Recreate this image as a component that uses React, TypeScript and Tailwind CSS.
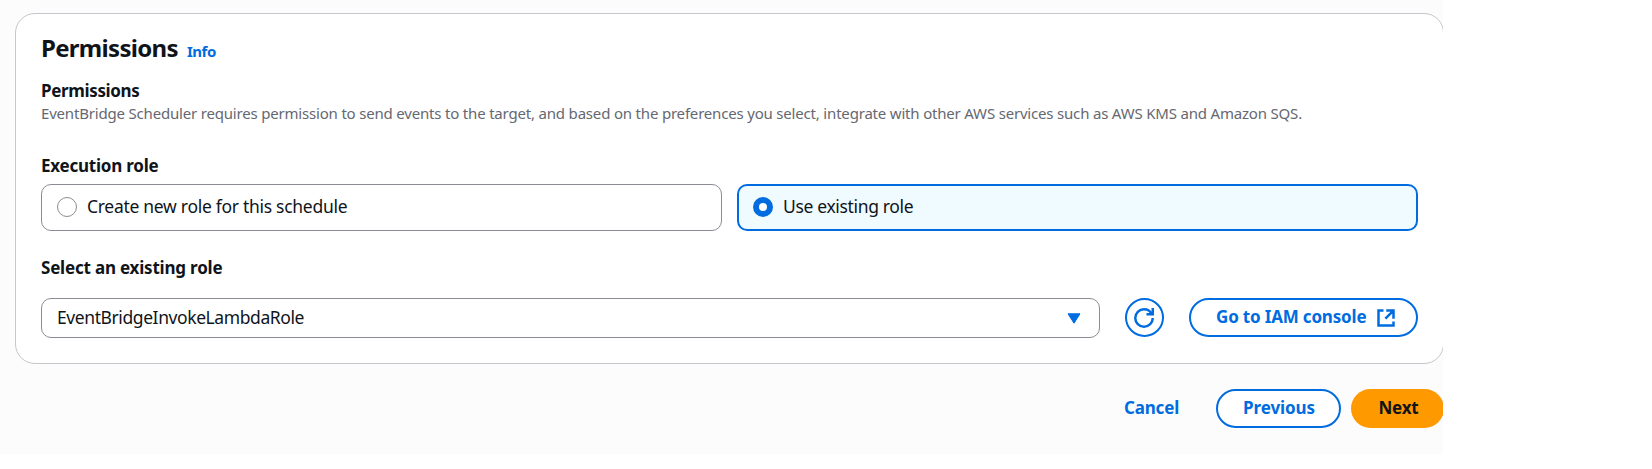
import type { ReactNode } from "react";

function FieldLabel({ className = "", children }: { className?: string; children: ReactNode }) {
  return <div className={`h-[22px] whitespace-nowrap text-[17px] leading-[22px] font-bold ${className}`}>{children}</div>;
}

function RefreshIcon() {
  return (
    <svg className="mr-px size-5" viewBox="0 0 16 16" fill="none" stroke="currentColor" strokeWidth="2">
      <path d="M15 8c0 3.87-3.13 7-7 7s-7-3.13-7-7 3.13-7 7-7c2.79 0 5.2 1.63 6.33 4" />
      <path d="M10 5h5V0" />
    </svg>
  );
}

function ExternalIcon() {
  return (
    <svg className="size-5" viewBox="0 0 16 16" fill="none" stroke="currentColor" strokeWidth="2">
      <path d="M14 8.5V2H8.2M13.5 2.5 7.5 8.5" />
      <path d="M6 2H2v12h12v-3.2" />
    </svg>
  );
}

export default function App() {
  return (
    <div className="h-[469px] w-[1652px] overflow-hidden bg-white font-['Noto_Sans',sans-serif] text-[#0f141a]">
      <main className="h-[454px] w-[1443px] overflow-hidden bg-[#fcfcfd] pt-[13px] pl-[15px]">
        <section className="h-[351px] w-[1429px] rounded-[20px] border border-[#c6c6cd] bg-white pt-[19px] pr-[25px] pl-[25px]">
          <header className="flex h-[30px] items-baseline">
            <h2 className="w-[146px] text-[24px] leading-[30px] font-bold tracking-[-0.7px]">Permissions</h2>
            <a className="text-[15px] leading-5 font-bold tracking-[-0.5px] text-[#006ce0]">Info</a>
          </header>

          <FieldLabel className="mt-[17px] tracking-[-0.35px]">Permissions</FieldLabel>
          <p className="mt-px h-5 text-[15px] leading-5 tracking-[-0.187px] whitespace-nowrap text-[#656871]">
            EventBridge Scheduler requires permission to send events to the target, and based on the preferences you select, integrate with other AWS services such as AWS KMS and Amazon SQS.
          </p>

          <FieldLabel className="mt-8 tracking-[-0.23px]">Execution role</FieldLabel>
          <div className="mt-[7px] grid h-[47px] grid-cols-2 gap-[15px]">
            <label className="flex items-center rounded-[10px] border border-[#8c8c94] pb-px pl-[15px]">
              <span className="size-5 shrink-0 rounded-full border border-[#8c8c94]" />
              <span className="ml-[10px] pb-[3px] text-[17.5px] leading-6 tracking-[-0.29px]">Create new role for this schedule</span>
            </label>
            <label className="flex items-center rounded-[10px] border-2 border-[#006ce0] bg-[#f0fbff] pb-px pl-[14px]">
              <span className="size-5 shrink-0 rounded-full border-[6px] border-[#006ce0] bg-white" />
              <span className="ml-[10px] pb-[3px] text-[17.5px] leading-6 tracking-[-0.34px]">Use existing role</span>
            </label>
          </div>

          <FieldLabel className="mt-[26px] tracking-[-0.2px]">Select an existing role</FieldLabel>
          <div className="mt-[19px] flex h-10 items-start">
            <div className="flex h-10 w-[1059px] items-center justify-between rounded-[10px] border border-[#8c8c94] pr-[18px] pl-[15px]">
              <span className="pb-[2px] text-[17.5px] leading-6 tracking-[-0.41px]">EventBridgeInvokeLambdaRole</span>
              <svg className="h-[11px] w-[14px] text-[#006ce0]" viewBox="0 0 14 11" fill="currentColor" stroke="currentColor" strokeLinejoin="round">
                <path d="M1 .8h12L7 10.2z" />
              </svg>
            </div>
            <button className="ml-[25px] flex size-[39px] items-center justify-center rounded-full border-2 border-[#006ce0] text-[#006ce0]">
              <RefreshIcon />
            </button>
            <button className="ml-[25px] flex h-[39px] w-[229px] items-center rounded-full border-2 border-[#006ce0] pl-[25px] text-[#006ce0]">
              <span className="w-[160px] pb-[2px] text-left text-[17px] leading-[22px] font-bold tracking-[-0.18px] whitespace-nowrap">Go to IAM console</span>
              <ExternalIcon />
            </button>
          </div>
        </section>

        <footer className="mt-[25px] flex h-[39px] w-[1429px] items-center justify-end text-[17px] leading-[22px] font-bold">
          <button className="mr-[37px] pb-px tracking-[-0.2px] text-[#006ce0]">Cancel</button>
          <button className="h-[39px] w-[125px] rounded-full border-2 border-[#006ce0] bg-white pb-px pl-px tracking-[-0.08px] text-[#006ce0]">Previous</button>
          <button className="ml-[10px] h-[39px] w-[93px] rounded-full bg-[#ff9900] pb-px pl-[2px] tracking-[-0.2px]">Next</button>
        </footer>
      </main>
    </div>
  );
}
